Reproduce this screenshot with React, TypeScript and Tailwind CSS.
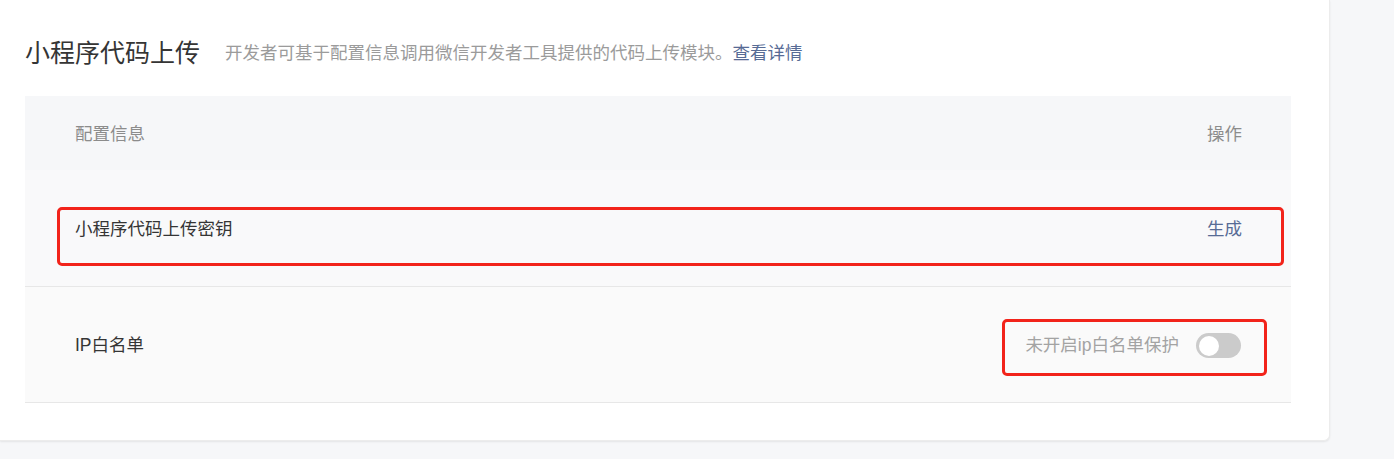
import React from "react";

const FONT = '"Liberation Sans", "Noto Sans CJK SC", sans-serif';

const Toggle = ({ on = false }: { on?: boolean }) => (
    <span className={`inline-flex h-[25px] w-[45px] items-center rounded-full p-[2.5px] ${on ? "bg-[#07c160] justify-end" : "bg-[#cbcbcb] justify-start"}`}>
        <span className="h-[20px] w-[20px] rounded-full bg-white" />
    </span>
);

export default function App() {
    return (
        <div className="h-[459px] w-full bg-[#f6f7f9] overflow-hidden" style={{ fontFamily: FONT }}>
            <div className="w-[1330px] bg-white rounded-br-[6px] shadow-[0_1px_2px_rgba(0,0,0,0.08)] border-r border-b border-[#ececec] pl-[25px] pr-[38px] pt-[35px] pb-[37px]">
                {/* Title */}
                <div className="flex h-[35px] items-center mb-[26px] pt-[2px]">
                    <h2 className="text-[25px] leading-none text-[#353535] font-normal">小程序代码上传</h2>
                    <p className="ml-[25px] text-[17.5px] leading-none text-[#9b9b9b]">
                        开发者可基于配置信息调用微信开发者工具提供的代码上传模块。
                        <a className="text-[#576b95]">查看详情</a>
                    </p>
                </div>

                {/* Table */}
                <div className="text-[17.5px]">
                    <div className="flex h-[74px] items-center justify-between bg-[#f6f7f9] pl-[50px] pr-[49px] pt-[3px] text-[#8c8c8c]">
                        <span>配置信息</span>
                        <span>操作</span>
                    </div>

                    <div className="relative flex h-[117px] items-center justify-between bg-[#f9f9fa] border-b border-[#e7e7e7] pl-[50px] pr-[49px] pt-[3px] text-[#353535]">
                        <span>小程序代码上传密钥</span>
                        <a className="text-[#576b95]">生成</a>
                        <div className="absolute left-[32px] right-[7px] top-[37px] h-[59px] rounded-[5px] border-[3px] border-[#f2231a]" />
                    </div>

                    <div className="relative flex h-[116px] items-center justify-between bg-[#fafafa] border-b border-[#e7e7e7] pl-[50px] pr-[50px] pt-[2px] text-[#353535]">
                        <span>IP白名单</span>
                        <div className="flex items-center gap-[17px]">
                            <span className="text-[#a3a3a3]">未开启ip白名单保护</span>
                            <Toggle />
                        </div>
                        <div className="absolute right-[24px] top-[32px] h-[57px] w-[265px] rounded-[5px] border-[3px] border-[#f2231a]" />
                    </div>
                </div>
            </div>
        </div>
    );
}
